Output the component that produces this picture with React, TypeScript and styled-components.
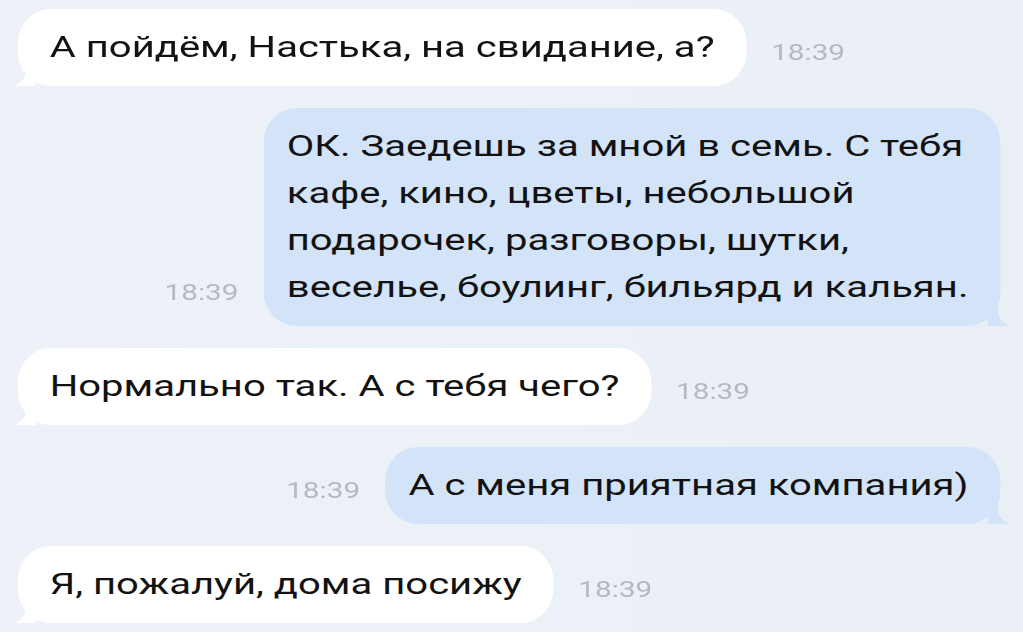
import React from 'react';
import styled, { createGlobalStyle } from 'styled-components';

// The screenshot is stretched sideways, so the chat is laid out at its
// natural width and widened as a whole.
const STRETCH = 1.38;

const GlobalStyle = createGlobalStyle`
  html, body {
    margin: 0;
    padding: 0;
    overflow: hidden;
    background: #ecf0f6;
  }
  body {
    font-family: Roboto, "Liberation Sans", sans-serif;
  }
`;

type Side = 'in' | 'out';

interface Message {
  id: number;
  side: Side;
  lines: string[];
  time: string;
}

const messages: Message[] = [
  { id: 1, side: 'in', lines: ['А пойдём, Настька, на свидание, а?'], time: '18:39' },
  {
    id: 2,
    side: 'out',
    lines: [
      'ОК. Заедешь за мной в семь. С тебя',
      'кафе, кино, цветы, небольшой',
      'подарочек, разговоры, шутки,',
      'веселье, боулинг, бильярд и кальян.',
    ],
    time: '18:39',
  },
  { id: 3, side: 'in', lines: ['Нормально так. А с тебя чего?'], time: '18:39' },
  { id: 4, side: 'out', lines: ['А с меня приятная компания)'], time: '18:39' },
  { id: 5, side: 'in', lines: ['Я, пожалуй, дома посижу'], time: '18:39' },
];

const Screen = styled.div`
  width: 1023px;
  height: 632px;
  overflow: hidden;
  background: linear-gradient(90deg, #eef2f8 0%, #eaeff6 100%);
`;

const Chat = styled.div`
  width: ${1023 / STRETCH}px;
  height: 632px;
  box-sizing: border-box;
  padding: 9px 16.5px 0 13px;
  display: flex;
  flex-direction: column;
  gap: 22px;
  transform: scaleX(${STRETCH});
  transform-origin: 0 0;
`;

const Row = styled.div<{ $side: Side }>`
  display: flex;
  flex-direction: ${p => (p.$side === 'in' ? 'row' : 'row-reverse')};
  align-items: flex-end;
  gap: 18px;
`;

const Bubble = styled.div<{ $side: Side }>`
  position: relative;
  padding: ${p => (p.$side === 'in' ? '15px 23px' : '15px 23px 15px 17px')};
  border-radius: 24px / 34px;
  background: ${p => (p.$side === 'in' ? '#ffffff' : '#d3e3f8')};
  color: #121212;
  font-size: 29px;
  line-height: 47px;
  white-space: nowrap;
`;

const Tail = styled.svg<{ $side: Side }>`
  position: absolute;
  bottom: 0;
  width: 16px;
  height: 22px;
  ${p => (p.$side === 'in' ? 'left: -3px;' : 'right: -7px; transform: scaleX(-1);')}
`;

const Time = styled.span`
  font-size: 21.5px;
  font-weight: 400;
  color: #b3b9c1;
  line-height: 47px;
  margin-bottom: 10px;
`;

const BubbleTail: React.FC<{ side: Side; color: string }> = ({ side, color }) => (
  <Tail $side={side} viewBox="0 0 16 22" preserveAspectRatio="none">
    <path d="M9 0 L16 0 L16 22 L0 22 C4 20 8 16 9 8 Z" fill={color} />
  </Tail>
);

const App: React.FC = () => (
  <>
    <GlobalStyle />
    <Screen>
      <Chat>
        {messages.map(m => (
          <Row key={m.id} $side={m.side}>
            <Bubble $side={m.side}>
              <BubbleTail side={m.side} color={m.side === 'in' ? '#ffffff' : '#d3e3f8'} />
              {m.lines.map((line, i) => (
                <div key={i}>{line}</div>
              ))}
            </Bubble>
            <Time>{m.time}</Time>
          </Row>
        ))}
      </Chat>
    </Screen>
  </>
);

export default App;
